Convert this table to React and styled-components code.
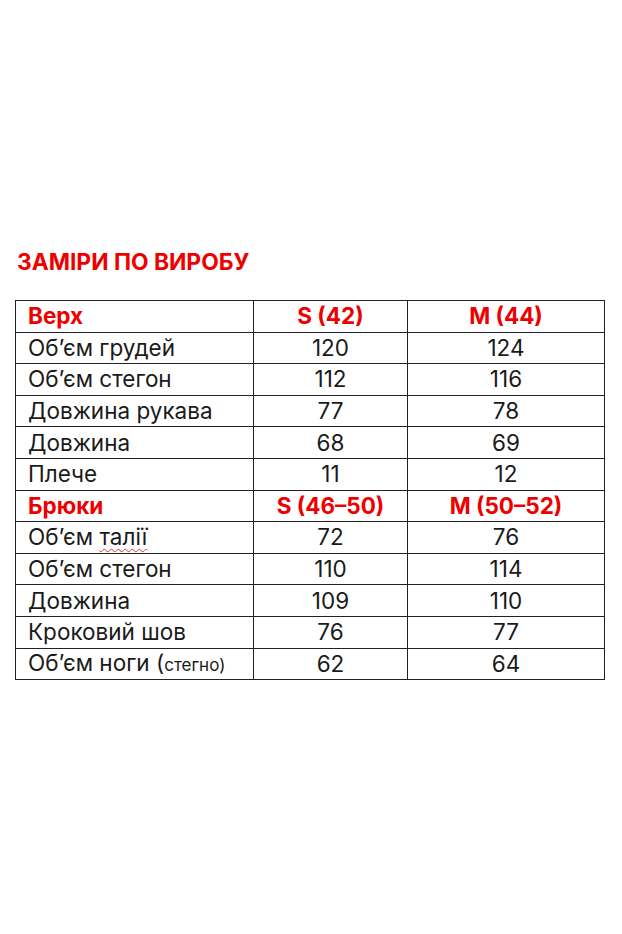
import React from "react";
import styled, { createGlobalStyle } from "styled-components";

const Global = createGlobalStyle`
  html, body { margin: 0; padding: 0; background: #fff; }
  body { font-family: Inter, "Liberation Sans", sans-serif; color: #1a1a1a; }
`;

const Page = styled.div`
  width: 622px;
  height: 934px;
  padding: 249px 0 0 17px;
  box-sizing: border-box;
`;

const Title = styled.h1`
  margin: 0 0 25px 0;
  font-size: 22.8px;
  font-weight: 700;
  line-height: 26px;
  color: #ee0000;
`;

const Table = styled.table`
  margin-left: -2px;
  border-collapse: collapse;
  width: 590px;
  table-layout: fixed;
`;

const Cell = styled.td`
  border: 1px solid #222;
  height: 31.6px;
  padding: 0 0 0 ${p => (p.$first ? "12px" : "0")};
  box-sizing: border-box;
  text-align: ${p => (p.$first ? "left" : "center")};
  font-size: 22.5px;
  line-height: 22px;
  font-weight: ${p => (p.$head ? 700 : 400)};
  color: ${p => (p.$head ? "#ee0000" : "#1a1a1a")};
  vertical-align: middle;
  white-space: nowrap;
`;

const Small = styled.span`
  font-size: 17px;
`;

const Wavy = styled.span`
  text-decoration: underline wavy #e03030;
  text-decoration-thickness: 1px;
  text-underline-offset: 3px;
`;

const rows = [
  { head: true, cells: ["Верх", "S (42)", "M (44)"] },
  { cells: ["Об’єм грудей", "120", "124"] },
  { cells: ["Об’єм стегон", "112", "116"] },
  { cells: ["Довжина рукава", "77", "78"] },
  { cells: ["Довжина", "68", "69"] },
  { cells: ["Плече", "11", "12"] },
  { head: true, cells: ["Брюки", "S (46–50)", "M (50–52)"] },
  { cells: [<>Об’єм <Wavy>талії</Wavy></>, "72", "76"] },
  { cells: ["Об’єм стегон", "110", "114"] },
  { cells: ["Довжина", "109", "110"] },
  { cells: ["Кроковий шов", "76", "77"] },
  { cells: [<>Об’єм ноги (<Small>стегно)</Small></>, "62", "64"] },
];

export default function App() {
  return (
    <Page>
      <Global />
      <Title>ЗАМІРИ ПО ВИРОБУ</Title>
      <Table>
        <colgroup>
          <col style={{ width: 238 }} />
          <col style={{ width: 154 }} />
          <col style={{ width: 197 }} />
        </colgroup>
        <tbody>
          {rows.map((r, i) => (
            <tr key={i}>
              {r.cells.map((c, j) => (
                <Cell key={j} $first={j === 0} $head={r.head}>
                  {c}
                </Cell>
              ))}
            </tr>
          ))}
        </tbody>
      </Table>
    </Page>
  );
}
